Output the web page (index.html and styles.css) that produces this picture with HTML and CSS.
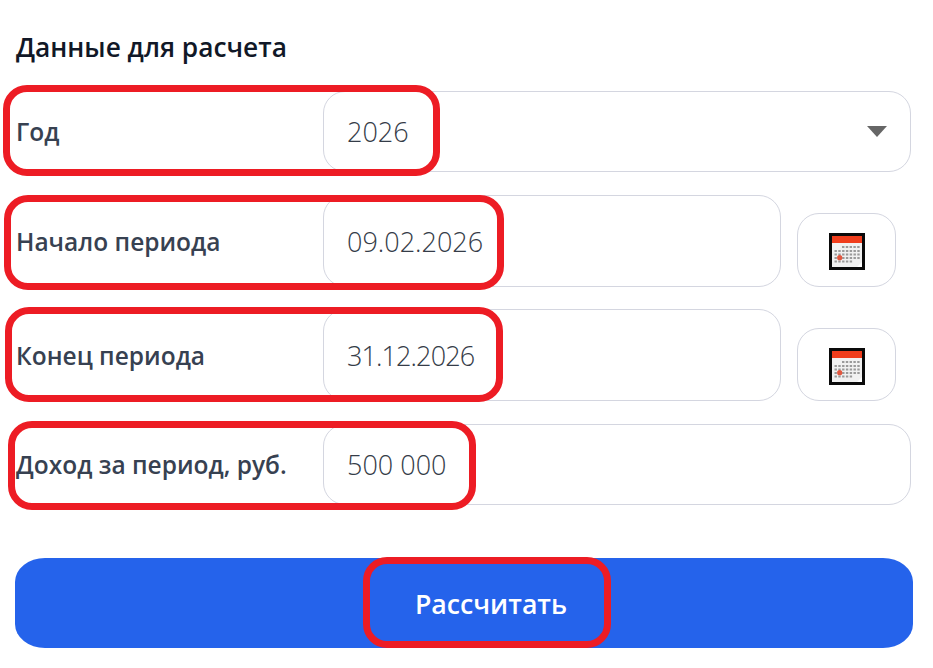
FILE: index.html
```html
<!DOCTYPE html>
<html lang="ru">
<head>
  <meta charset="UTF-8">
  <title>Данные для расчета</title>
  <link rel="stylesheet" href="styles.css">
</head>
<body>
  <!-- Calendar icon, used by both date rows -->
  <svg class="icon-defs" width="0" height="0">
    <symbol id="calendar" viewBox="0 0 36 37">
      <rect width="36" height="37" fill="#0a0a0a"/>
      <rect x="3" y="3" width="30" height="31" fill="#f1f1f1"/>
      <rect x="3" y="3" width="30" height="7" fill="#f03d1c"/>
      <g stroke="#9a9a9a" stroke-width="2.2" stroke-dasharray="2.4 1.4">
        <line x1="13" y1="14" x2="31" y2="14"/>
        <line x1="5.5" y1="18" x2="31" y2="18"/>
        <line x1="5.5" y1="21.5" x2="31" y2="21.5"/>
        <line x1="5.5" y1="25" x2="31" y2="25"/>
        <line x1="5.5" y1="28.5" x2="24" y2="28.5"/>
      </g>
      <circle cx="10.7" cy="24.7" r="2.6" fill="#e2573f"/>
      <path d="M33 29v5h-5z" fill="#fff"/>
    </symbol>
  </svg>

  <div id="form">
    <h2 class="form-title">Данные для расчета</h2>

    <div class="row row-year">
      <div class="row-label">Год</div>
      <div class="field">
        <span>2026</span>
        <i class="arrow"></i>
      </div>
    </div>

    <div class="row row-date">
      <div class="row-label">Начало периода</div>
      <div class="field"><span>09.02.2026</span></div>
      <div class="cal-btn"><svg class="cal-icon"><use href="#calendar"/></svg></div>
    </div>

    <div class="row row-date row-end">
      <div class="row-label">Конец периода</div>
      <div class="field"><span class="tight">31.12.2026</span></div>
      <div class="cal-btn"><svg class="cal-icon"><use href="#calendar"/></svg></div>
    </div>

    <div class="row row-income">
      <div class="row-label">Доход за период, руб.</div>
      <div class="field"><span>500 000</span></div>
    </div>

    <button class="submit">Рассчитать</button>
  </div>

  <!-- Red marker frames drawn over the form -->
  <div class="mark mark-year"></div>
  <div class="mark mark-start"></div>
  <div class="mark mark-end"></div>
  <div class="mark mark-income"></div>
  <div class="mark mark-submit"></div>
</body>
</html>
```

FILE: styles.css
```css
* {
  box-sizing: border-box;
}
body {
  margin: 0;
  background: #fff;
  font-family: "Open Sans", "Noto Sans", sans-serif;
}
.icon-defs {
  display: block;
}
#form {
  width: 933px;
  padding: 31px 20px 0 16px;
}
.form-title {
  margin: 0 0 27px;
  font-size: 26.3px;
  line-height: 33px;
  font-weight: 600;
  color: #111827;
}
.row {
  display: flex;
  align-items: stretch;
  margin-right: 2px;
}
.row-year {
  height: 81px;
  margin-bottom: 23px;
}
.row-date {
  height: 92px;
  margin-bottom: 22px;
}
.row-end {
  margin-bottom: 23px;
}
.row-end .cal-btn {
  margin-top: 19px;
}
.row-income {
  height: 81px;
  margin-bottom: 53px;
}
.row-label {
  width: 307px;
  flex: none;
  display: flex;
  align-items: center;
  font-size: 24.5px;
  font-weight: 600;
  color: #374151;
}
.field {
  flex: 1;
  display: flex;
  align-items: center;
  justify-content: space-between;
  padding: 0 23px;
  border: 1px solid #d4d6e0;
  border-radius: 22px;
  font-size: 27px;
  font-weight: 300;
  color: #353c48;
}
.tight {
  letter-spacing: -0.9px;
}
.arrow {
  width: 0;
  height: 0;
  border-left: 10px solid transparent;
  border-right: 10px solid transparent;
  border-top: 11px solid #666;
}
.cal-btn {
  width: 99px;
  margin: 18px 15px 0 16px;
  padding-top: 3px;
  flex: none;
  display: flex;
  align-items: center;
  justify-content: center;
  border: 1px solid #d4d6e0;
  border-radius: 22px;
}
.cal-icon {
  width: 36px;
  height: 37px;
}
.submit {
  display: block;
  width: 898px;
  height: 90px;
  margin-left: -1px;
  padding-left: 60px;
  border: none;
  border-radius: 30px / 24px;
  background: #2563eb;
  color: #fff;
  font-family: inherit;
  font-size: 26.7px;
  font-weight: 600;
}
/* Marker frames */
.mark {
  position: absolute;
  border: 7px solid #ed1c24;
  border-radius: 24px;
}
.mark-year {
  left: 3px;
  top: 85px;
  width: 437px;
  height: 91px;
}
.mark-start {
  left: 4px;
  top: 195px;
  width: 500px;
  height: 95px;
}
.mark-end {
  left: 5px;
  top: 307px;
  width: 498px;
  height: 95px;
}
.mark-income {
  left: 8px;
  top: 421px;
  width: 468px;
  height: 89px;
}
.mark-submit {
  left: 363px;
  top: 557px;
  width: 248px;
  height: 91px;
}
```
